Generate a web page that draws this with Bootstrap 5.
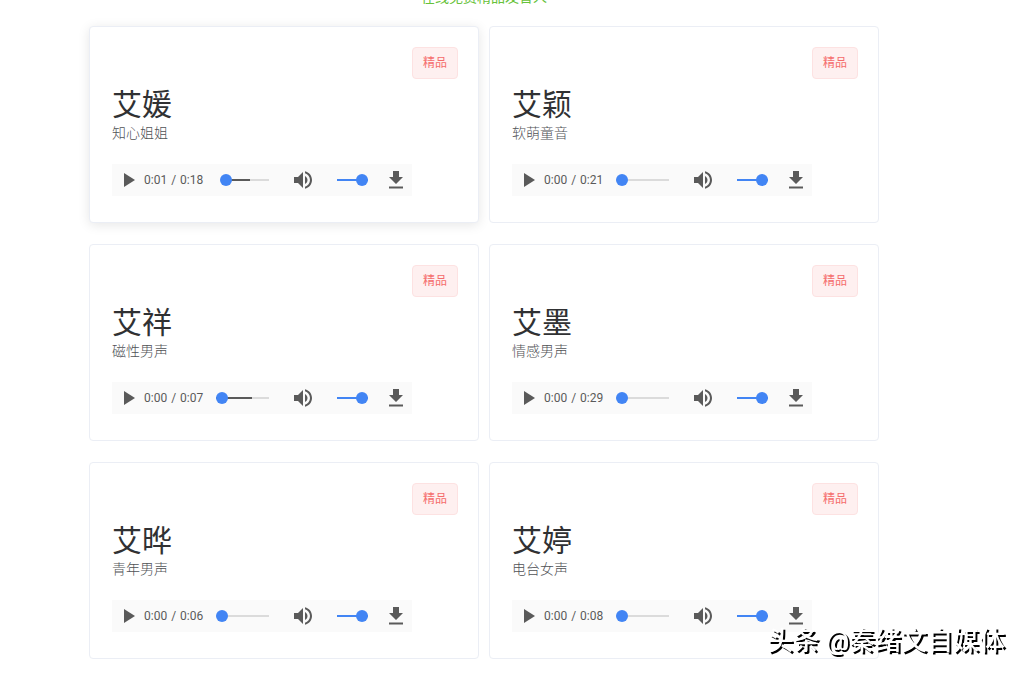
<!DOCTYPE html>
<html lang="zh-CN">
<head>
<meta charset="utf-8">
<meta name="viewport" content="width=device-width, initial-scale=1">
<title>精品发音人</title>
<link href="https://cdn.jsdelivr.net/npm/bootstrap@5.3.0/dist/css/bootstrap.min.css" rel="stylesheet">
<style>
  body { font-family: Roboto, "Noto Sans CJK SC", sans-serif; color: #303133; background: #fff; overflow-x: hidden; }
  .voices { max-width: 790px; margin-left: 89px; }
  .intro { height: 5px; margin-bottom: 21px; font-size: 14px; line-height: 16px; color: #67c23a; }
  .voice-grid { --bs-gutter-x: 10px; }
  .voice-card { --bs-card-border-color: #ebeef5; --bs-card-border-radius: 4px; --bs-card-bg: #fff; min-height: 197px; margin-bottom: 21px; }
  .voice-card.active, .voice-card:hover { box-shadow: 0 2px 12px rgba(0, 0, 0, .1); }
  .voice-card .card-body { padding: 20px 20px 20px 22px; }
  .premium { font-size: 12px; line-height: 30px; padding: 0 10px; color: #f56c6c; background: #fef0f0; border: 1px solid #fde2e2; border-radius: 4px; }
  .voice-name { font-size: 30px; line-height: 37px; font-weight: 400; margin-top: 7px; }
  .voice-kind { font-size: 14px; line-height: 20px; font-weight: 300; color: #505256; }
  .player { width: 300px; height: 32px; margin-top: 21px; padding: 0 4px; background: #fafafa; color: #5a5a5a; }
  .player button, .player a { display: flex; padding: 0; border: 0; background: none; color: inherit; }
  .player svg { width: 24px; height: 24px; fill: currentColor; }
  .time { width: 72px; margin-left: 4px; gap: 4px; font-size: 12px; line-height: 16px; }
  .slider { appearance: none; height: 12px; margin: 0; background: none; }
  .slider::-webkit-slider-runnable-track { height: 2px; background: linear-gradient(90deg, transparent var(--at, 0%), #5a5a5a var(--at, 0%) var(--loaded, 0%), #dbdbdb var(--loaded, 0%)); }
  .slider::-webkit-slider-thumb { appearance: none; width: 12px; height: 12px; margin-top: -5px; border-radius: 50%; background: #4285f4; }
  .seek { width: 53px; margin-right: 22px; }
  .volume { width: 31px; margin: 0 16px 0 22px; }
  .volume::-webkit-slider-runnable-track { background: #4285f4; }
  .signature { right: 20px; bottom: 15px; font-size: 26px; line-height: 36px; font-weight: 500; color: #fff; text-shadow: 2px 2px 0 #000; white-space: nowrap; }
</style>
</head>
<body>
<svg class="d-none" aria-hidden="true">
  <symbol id="play" viewBox="0 0 24 24"><path d="M8 5v14l11-7z"/></symbol>
  <symbol id="sound" viewBox="0 0 24 24"><path d="M3 9v6h4l5 5V4L7 9H3zm13.5 3c0-1.77-1.02-3.29-2.5-4.03v8.05c1.48-.73 2.5-2.25 2.5-4.02zM14 3.23v2.06c2.89.86 5 3.54 5 6.71s-2.11 5.85-5 6.71v2.06c4.01-.91 7-4.49 7-8.77s-2.99-7.86-7-8.77z"/></symbol>
  <symbol id="download" viewBox="0 0 24 24"><path d="M19 9h-4V3H9v6H5l7 7 7-7zM5 18.5v2h14v-2z"/></symbol>
</svg>
<main class="voices">
  <p class="intro d-flex align-items-end justify-content-center">在线免费精品发音人</p>
  <div class="row voice-grid" id="voices"></div>
</main>
<div class="signature position-fixed">头条 @秦绪文自媒体</div>
<script src="https://cdn.jsdelivr.net/npm/bootstrap@5.3.0/dist/js/bootstrap.bundle.min.js"></script>
<script>
  const voices = [
    { name: '艾媛', kind: '知心姐姐', now: '0:01', total: '0:18', at: 10, loaded: 64, active: true },
    { name: '艾颖', kind: '软萌童音', now: '0:00', total: '0:21', at: 0, loaded: 0 },
    { name: '艾祥', kind: '磁性男声', now: '0:00', total: '0:07', at: 0, loaded: 68 },
    { name: '艾墨', kind: '情感男声', now: '0:00', total: '0:29', at: 0, loaded: 0 },
    { name: '艾晔', kind: '青年男声', now: '0:00', total: '0:06', at: 0, loaded: 0 },
    { name: '艾婷', kind: '电台女声', now: '0:00', total: '0:08', at: 0, loaded: 0 }
  ];
  document.getElementById('voices').innerHTML = voices.map(v => `
    <div class="col-12 col-md-6">
      <article class="card voice-card ${v.active ? 'active' : ''}">
        <div class="card-body d-flex flex-column">
          <span class="premium align-self-end">精品</span>
          <h2 class="voice-name mb-0">${v.name}</h2>
          <p class="voice-kind mb-0">${v.kind}</p>
          <div class="player d-flex align-items-center">
            <button type="button" aria-label="播放"><svg><use href="#play"/></svg></button>
            <div class="time d-flex"><span>${v.now}</span><span>/</span><span>${v.total}</span></div>
            <input class="slider seek" type="range" min="0" max="100" value="${v.at}" aria-label="进度" style="--at:${v.at}%;--loaded:${v.loaded}%">
            <button type="button" aria-label="静音"><svg><use href="#sound"/></svg></button>
            <input class="slider volume" type="range" min="0" max="100" value="100" aria-label="音量">
            <a href="#" aria-label="下载"><svg><use href="#download"/></svg></a>
          </div>
        </div>
      </article>
    </div>`).join('');
</script>
</body>
</html>
